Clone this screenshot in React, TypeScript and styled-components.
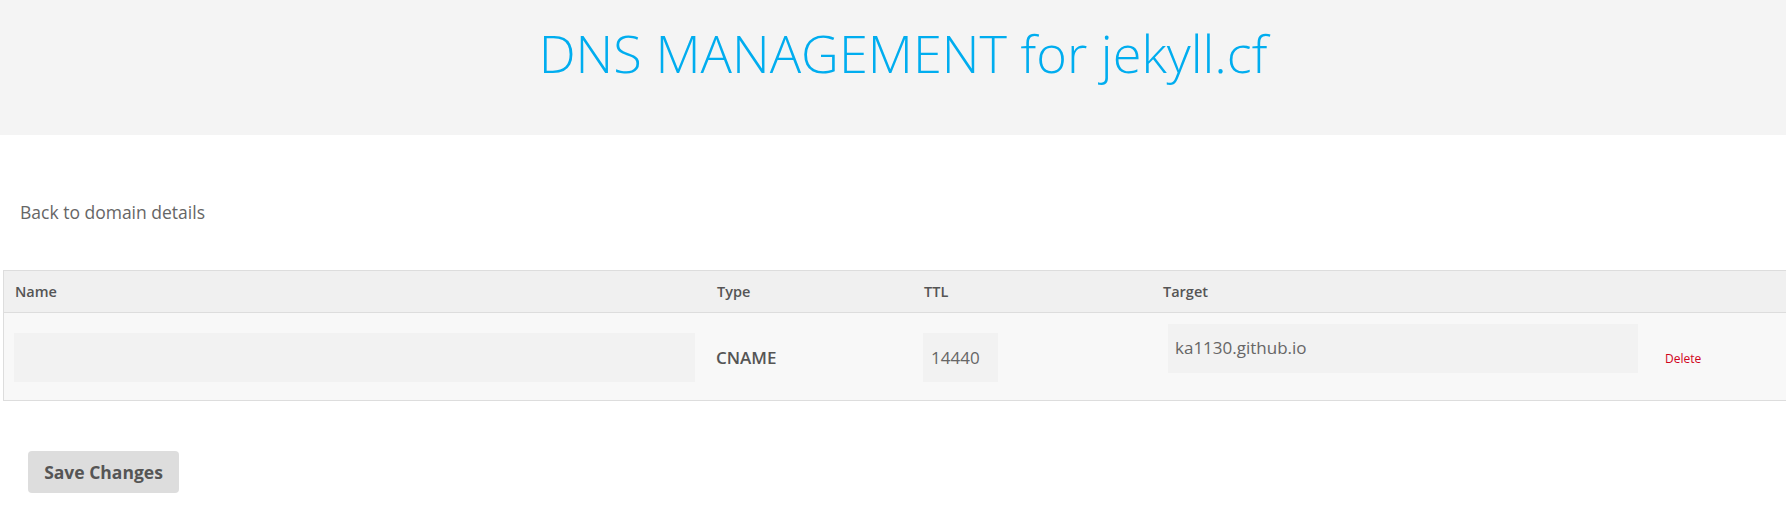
import styled, { createGlobalStyle } from 'styled-components';

const GlobalStyle = createGlobalStyle`
    html, body {
        margin: 0;
        padding: 0;
        overflow: hidden;
        background: #fff;
        font-family: "Open Sans", "Liberation Sans", sans-serif;
        color: #666;
    }
`

const Header = styled.header`
    height: 135px;
    background: #f4f4f4;
    display: flex;
    justify-content: center;
    padding-left: 20px;
`

const Title = styled.h1`
    margin: 0;
    padding-top: 17px;
    font-size: 52.3px;
    font-weight: 300;
    line-height: 72px;
    color: #00adef;
`

const Main = styled.main`
    padding: 65px 0 0 3px;
`

const BackLink = styled.a`
    display: block;
    margin-left: 17px;
    font-size: 17.5px;
    line-height: 24px;
    color: #666;
    text-decoration: none;
    cursor: pointer;
`

const Table = styled.div`
    margin-top: 46px;
    width: 1820px;
    border: 1px solid #ddd;
`

const Row = styled.div<{ $head?: boolean }>`
    display: grid;
    grid-template-columns: 702px 207px 239px 503px 1fr;
    align-items: center;
    padding-left: 10px;
    background: ${p => (p.$head ? '#f0f0f0' : '#f8f8f8')};
    height: ${p => (p.$head ? '41px' : '87px')};
    border-bottom: ${p => (p.$head ? '1px solid #ddd' : 'none')};
`

const HeadCell = styled.div`
    font-size: 14.5px;
    font-weight: 600;
    color: #555;
    padding-left: 1px;
`

const Field = styled.input<{ $w: number }>`
    box-sizing: border-box;
    width: ${p => p.$w}px;
    height: 49px;
    margin-top: 2px;
    border: none;
    outline: none;
    background: #f2f2f2;
    padding: 0 8px;
    font-family: "Open Sans", "Liberation Sans", sans-serif;
    font-size: 17px;
    color: #666;
`

const TargetArea = styled.textarea`
    box-sizing: border-box;
    width: 470px;
    height: 49px;
    margin: 0 0 16px 6px;
    border: none;
    outline: none;
    resize: none;
    background: #f2f2f2;
    padding: 12px 7px 0;
    font-family: "Open Sans", "Liberation Sans", sans-serif;
    font-size: 17px;
    line-height: 24px;
    color: #666;
    overflow: hidden;
`

const TypeText = styled.div`
    font-size: 17px;
    font-weight: 600;
    color: #555;
    padding-top: 2px;
`

const DeleteLink = styled.a`
    font-size: 12px;
    color: #d0021b;
    text-decoration: none;
    padding-top: 4px;
    cursor: pointer;
`

const SaveButton = styled.button`
    margin: 50px 0 0 25px;
    width: 151px;
    height: 42px;
    border: none;
    border-radius: 4px;
    background: #ddd;
    font-family: "Open Sans", "Liberation Sans", sans-serif;
    font-size: 17.5px;
    font-weight: 700;
    color: #555;
    cursor: pointer;
`

const App = () => {
    return (
        <>
            <GlobalStyle />
            <Header>
                <Title>DNS MANAGEMENT for jekyll.cf</Title>
            </Header>
            <Main>
                <BackLink>Back to domain details</BackLink>
                <Table>
                    <Row $head>
                        <HeadCell>Name</HeadCell>
                        <HeadCell>Type</HeadCell>
                        <HeadCell>TTL</HeadCell>
                        <HeadCell>Target</HeadCell>
                        <div />
                    </Row>
                    <Row>
                        <Field $w={681} defaultValue="" />
                        <TypeText>CNAME</TypeText>
                        <Field $w={75} defaultValue="14440" />
                        <TargetArea defaultValue="ka1130.github.io" />
                        <DeleteLink>Delete</DeleteLink>
                    </Row>
                </Table>
                <SaveButton>Save Changes</SaveButton>
            </Main>
        </>
    )
}

export default App;
